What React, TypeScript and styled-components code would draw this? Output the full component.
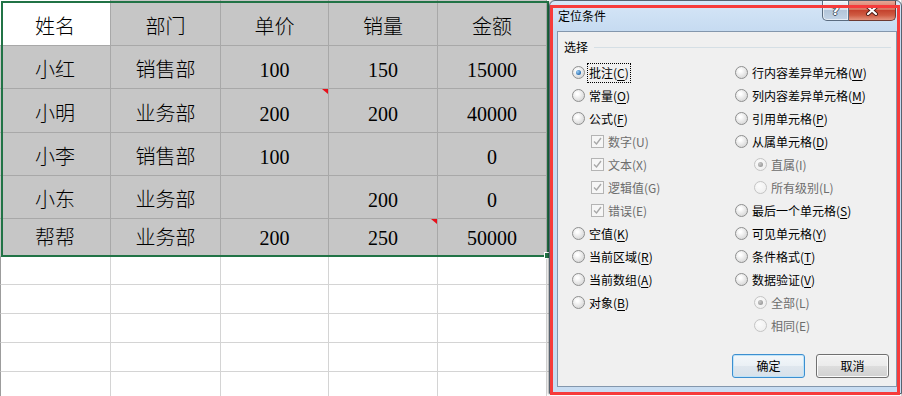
import React from "react";
import styled, { createGlobalStyle } from "styled-components";

const GlobalStyle = createGlobalStyle`
  html, body { margin: 0; padding: 0; background: #fff; }
  body { font-family: "Noto Sans CJK SC", sans-serif; }
`;

const Root = styled.div`
  position: relative;
  width: 902px;
  height: 396px;
  overflow: hidden;
  background: #fff;
`;

const Sheet = styled.div`
  position: relative;
  display: grid;
  grid-template-columns: 111px 110px 108px 109px 109px 1fr;
  grid-template-rows: 46px 43px 44px 43px 43px 38px 28px 29px 29px 29px 29px;
`;

const Cell = styled.div<{ $sel?: boolean; $active?: boolean; $first?: boolean }>`
  position: relative;
  box-sizing: border-box;
  display: flex;
  align-items: flex-end;
  justify-content: center;
  padding-bottom: 6px;
  border-right: 1px solid ${(p) => (p.$sel ? "#a8a8a8" : "#d4d4d4")};
  border-bottom: 1px solid ${(p) => (p.$sel ? "#a8a8a8" : "#d4d4d4")};
  border-left: ${(p) => (p.$first && !p.$sel ? "1px solid #9c9c9c" : "none")};
  background: ${(p) => (p.$active ? "#fff" : p.$sel ? "#c6c6c6" : "#fff")};
  font: 300 20px/24px "Liberation Serif", "Noto Sans CJK SC", serif;
  color: #000;
`;

const CommentMark = styled.span`
  position: absolute;
  top: 0;
  right: 0;
  width: 0;
  height: 0;
  border-left: 6px solid transparent;
  border-top: 5px solid #e8101a;
`;

const Selection = styled.div`
  position: absolute;
  left: 1px;
  top: 1px;
  width: 548px;
  height: 256px;
  box-sizing: border-box;
  border: 2px solid #217346;
  pointer-events: none;
`;

const FillHandle = styled.div`
  position: absolute;
  left: 544px;
  top: 252px;
  width: 7px;
  height: 7px;
  box-sizing: border-box;
  background: #217346;
  border: 1px solid #fff;
`;

const Window = styled.div`
  position: absolute;
  left: 549px;
  top: 0;
  width: 353px;
  height: 394px;
  box-sizing: border-box;
  border: 1px solid #56626f;
  border-radius: 6px 6px 0 0;
  background: linear-gradient(#d6e6f7, #c6dbf1 30px, #c9ddf2);
  display: flex;
  flex-direction: column;
  box-shadow: -1px 0 2px rgba(0, 0, 0, 0.35);
`;

const TitleBar = styled.div`
  height: 30px;
  flex: none;
  display: flex;
  align-items: flex-start;
  padding-left: 8px;
`;

const TitleText = styled.span`
  margin-top: 7px;
  font-size: 12px;
  line-height: 16px;
  color: #000;
`;

const CaptionButtons = styled.div`
  margin-left: auto;
  margin-right: 5px;
  display: flex;
`;

const HelpButton = styled.div`
  width: 27px;
  height: 20px;
  box-sizing: border-box;
  border: 1px solid #5b6c80;
  border-top: none;
  border-radius: 0 0 0 5px;
  background: linear-gradient(#eef3f9, #d6e1ed 45%, #b3c5d9 50%, #c3d4e6);
  box-shadow: inset 0 0 0 1px rgba(255, 255, 255, 0.6);
  display: flex;
  align-items: center;
  justify-content: center;
  font: bold 13px/14px "DejaVu Sans", sans-serif;
  color: #fff;
  text-shadow: 1px 0 0 #4a5868, -1px 0 0 #4a5868, 0 1px 0 #4a5868, 0 -1px 0 #4a5868;
`;

const CloseButton = styled.div`
  width: 47px;
  height: 20px;
  box-sizing: border-box;
  border: 1px solid #6d3a32;
  border-left: none;
  border-top: none;
  border-radius: 0 0 5px 0;
  background: linear-gradient(#e7a595, #d6735f 45%, #c4432e 50%, #cf5b43 75%, #e3927c);
  display: flex;
  align-items: center;
  justify-content: center;
`;

const Client = styled.div`
  flex: 1;
  margin: 0 4px 6px 7px;
  border: 1px solid #8497ad;
  background: #f0f0f0;
  display: flex;
  flex-direction: column;
  font-size: 12px;
  color: #000;
`;

const GroupHead = styled.div`
  display: flex;
  align-items: center;
  gap: 6px;
  height: 16px;
  margin-top: 7px;
  padding: 0 5px 0 6px;
  line-height: 16px;
`;

const GroupLine = styled.div`
  flex: 1;
  height: 1px;
  background: #d5dfe5;
`;

const Options = styled.div`
  display: grid;
  grid-template-columns: 163px 1fr;
  padding-left: 14px;
  margin-top: 6px;
`;

const Column = styled.div`
  display: flex;
  flex-direction: column;
`;

const Option = styled.div<{ $indent?: boolean; $disabled?: boolean }>`
  height: 23px;
  display: flex;
  align-items: center;
  gap: 5px;
  padding-left: ${(p) => (p.$indent ? "19px" : "0")};
  color: ${(p) => (p.$disabled ? "#6d6d6d" : "#000")};
  line-height: 16px;
  white-space: nowrap;
`;

const Label = styled.span<{ $focus?: boolean }>`
  padding: 1px 1px;
  margin-left: -2px;
  outline: ${(p) => (p.$focus ? "1px dotted #000" : "none")};
  outline-offset: 0;
`;

const Key = styled.span`
  text-decoration: underline;
  text-underline-offset: 2px;
`;

const RadioCircle = styled.span<{ $disabled?: boolean }>`
  flex: none;
  width: 13px;
  height: 13px;
  box-sizing: border-box;
  border-radius: 50%;
  border: 1px solid ${(p) => (p.$disabled ? "#c4c4c4" : "#8e8f8f")};
  background: ${(p) =>
    p.$disabled
      ? "radial-gradient(circle at 40% 35%, #fbfbfb, #ececec)"
      : "radial-gradient(circle at 40% 35%, #ffffff 10%, #e2e2e2 60%, #cfcfcf)"};
  display: flex;
  align-items: center;
  justify-content: center;
`;

const RadioDot = styled.span<{ $disabled?: boolean }>`
  width: 5px;
  height: 5px;
  border-radius: 50%;
  background: ${(p) =>
    p.$disabled
      ? "radial-gradient(circle at 35% 35%, #c8c8c8, #8a8a8a)"
      : "radial-gradient(circle at 35% 35%, #9fd0f6, #2a6fb2 70%, #1b4f86)"};
`;

const CheckBox = styled.span`
  flex: none;
  width: 13px;
  height: 13px;
  box-sizing: border-box;
  border: 1px solid #b4b4b4;
  background: #f6f6f6;
  display: flex;
  align-items: center;
  justify-content: center;
`;

const Footer = styled.div`
  margin-top: auto;
  display: flex;
  justify-content: flex-end;
  gap: 11px;
  padding: 0 7px 8px 0;
`;

const Button = styled.div<{ $default?: boolean }>`
  width: 73px;
  height: 24px;
  box-sizing: border-box;
  border-radius: 3px;
  border: 1px solid ${(p) => (p.$default ? "#3c8fd0" : "#707070")};
  background: ${(p) =>
    p.$default
      ? "linear-gradient(#f3f7fa, #eaf0f5 50%, #dfe7ee 51%, #d7e1ea)"
      : "linear-gradient(#f3f3f3, #ebebeb 50%, #dddddd 51%, #d1d1d1)"};
  box-shadow: ${(p) => (p.$default ? "inset 0 0 0 1px #bfe3f8" : "inset 0 0 0 1px #fbfbfb")};
  display: flex;
  align-items: center;
  justify-content: center;
  font-size: 12px;
  line-height: 16px;
`;

const RedFrame = styled.div`
  position: absolute;
  left: 550px;
  top: 5px;
  width: 350px;
  height: 390px;
  box-sizing: border-box;
  border: 3px solid #f63b3b;
  pointer-events: none;
`;

type Row = { cells: string[]; comments?: number[] };

const header = ["姓名", "部门", "单价", "销量", "金额"];
const rows: Row[] = [
  { cells: ["小红", "销售部", "100", "150", "15000"] },
  { cells: ["小明", "业务部", "200", "200", "40000"], comments: [2] },
  { cells: ["小李", "销售部", "100", "", "0"] },
  { cells: ["小东", "业务部", "", "200", "0"] },
  { cells: ["帮帮", "业务部", "200", "250", "50000"], comments: [3] },
];

type Opt = {
  text: string;
  key?: string;
  kind: "radio" | "check";
  checked?: boolean;
  disabled?: boolean;
  indent?: boolean;
  focus?: boolean;
};

const leftOpts: Opt[] = [
  { text: "批注", key: "C", kind: "radio", checked: true, focus: true },
  { text: "常量", key: "O", kind: "radio" },
  { text: "公式", key: "F", kind: "radio" },
  { text: "数字(U)", kind: "check", checked: true, disabled: true, indent: true },
  { text: "文本(X)", kind: "check", checked: true, disabled: true, indent: true },
  { text: "逻辑值(G)", kind: "check", checked: true, disabled: true, indent: true },
  { text: "错误(E)", kind: "check", checked: true, disabled: true, indent: true },
  { text: "空值", key: "K", kind: "radio" },
  { text: "当前区域", key: "R", kind: "radio" },
  { text: "当前数组", key: "A", kind: "radio" },
  { text: "对象", key: "B", kind: "radio" },
];

const rightOpts: Opt[] = [
  { text: "行内容差异单元格", key: "W", kind: "radio" },
  { text: "列内容差异单元格", key: "M", kind: "radio" },
  { text: "引用单元格", key: "P", kind: "radio" },
  { text: "从属单元格", key: "D", kind: "radio" },
  { text: "直属(I)", kind: "radio", checked: true, disabled: true, indent: true },
  { text: "所有级别(L)", kind: "radio", disabled: true, indent: true },
  { text: "最后一个单元格", key: "S", kind: "radio" },
  { text: "可见单元格", key: "Y", kind: "radio" },
  { text: "条件格式", key: "T", kind: "radio" },
  { text: "数据验证", key: "V", kind: "radio" },
  { text: "全部(L)", kind: "radio", checked: true, disabled: true, indent: true },
  { text: "相同(E)", kind: "radio", disabled: true, indent: true },
];

function OptionItem({ o }: { o: Opt }) {
  return (
    <Option $indent={o.indent} $disabled={o.disabled}>
      {o.kind === "radio" ? (
        <RadioCircle $disabled={o.disabled}>
          {o.checked && <RadioDot $disabled={o.disabled} />}
        </RadioCircle>
      ) : (
        <CheckBox>
          <svg width="9" height="9" viewBox="0 0 9 9">
            <polyline points="1,4.5 3.5,7 8,1" fill="none" stroke="#a8a8a8" strokeWidth="1.4" />
          </svg>
        </CheckBox>
      )}
      <Label $focus={o.focus}>
        {o.text}
        {o.key && (
          <>
            (<Key>{o.key}</Key>)
          </>
        )}
      </Label>
    </Option>
  );
}

export default function App() {
  const emptyRows = 5;
  return (
    <Root>
      <GlobalStyle />
      <Sheet>
        {header.map((h, i) => (
          <Cell key={"h" + i} $sel $active={i === 0} $first={i === 0}>
            {h}
          </Cell>
        ))}
        <Cell />
        {rows.map((r, ri) => (
          <React.Fragment key={"r" + ri}>
            {r.cells.map((c, ci) => (
              <Cell key={ci} $sel $first={ci === 0}>
                {c}
                {r.comments?.includes(ci) && <CommentMark />}
              </Cell>
            ))}
            <Cell />
          </React.Fragment>
        ))}
        {Array.from({ length: emptyRows }).map((_, ri) => (
          <React.Fragment key={"e" + ri}>
            {Array.from({ length: 6 }).map((__, ci) => (
              <Cell key={ci} $first={ci === 0} />
            ))}
          </React.Fragment>
        ))}
        <Selection />
        <FillHandle />
      </Sheet>

      <Window>
        <TitleBar>
          <TitleText>定位条件</TitleText>
          <CaptionButtons>
            <HelpButton>?</HelpButton>
            <CloseButton>
              <svg width="14" height="11" viewBox="0 0 14 11">
                <path d="M3 2 L11 9 M11 2 L3 9" stroke="#4a1a14" strokeWidth="4" strokeLinecap="round" />
                <path d="M3 2 L11 9 M11 2 L3 9" stroke="#fff" strokeWidth="2.2" strokeLinecap="round" />
              </svg>
            </CloseButton>
          </CaptionButtons>
        </TitleBar>
        <Client>
          <GroupHead>
            <span>选择</span>
            <GroupLine />
          </GroupHead>
          <Options>
            <Column>
              {leftOpts.map((o, i) => (
                <OptionItem key={i} o={o} />
              ))}
            </Column>
            <Column>
              {rightOpts.map((o, i) => (
                <OptionItem key={i} o={o} />
              ))}
            </Column>
          </Options>
          <Footer>
            <Button $default>确定</Button>
            <Button>取消</Button>
          </Footer>
        </Client>
      </Window>
      <RedFrame />
    </Root>
  );
}
